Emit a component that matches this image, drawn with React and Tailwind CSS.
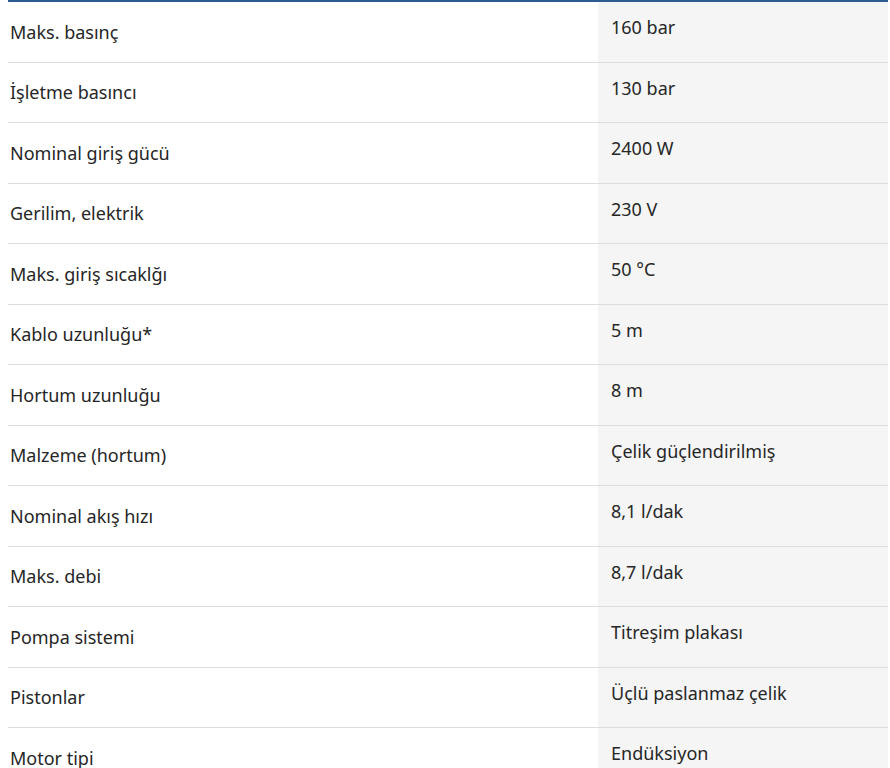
const specs = [
  ['Maks. basınç', '160 bar'],
  ['İşletme basıncı', '130 bar'],
  ['Nominal giriş gücü', '2400 W'],
  ['Gerilim, elektrik', '230 V'],
  ['Maks. giriş sıcaklğı', '50 °C'],
  ['Kablo uzunluğu*', '5 m'],
  ['Hortum uzunluğu', '8 m'],
  ['Malzeme (hortum)', 'Çelik güçlendirilmiş'],
  ['Nominal akış hızı', '8,1 l/dak'],
  ['Maks. debi', '8,7 l/dak'],
  ['Pompa sistemi', 'Titreşim plakası'],
  ['Pistonlar', 'Üçlü paslanmaz çelik'],
  ['Motor tipi', 'Endüksiyon'],
];

export default function App() {
  return (
    <div
      className="h-[768px] w-[890px] overflow-hidden bg-white pl-[8px] pr-[2px] text-[#262626]"
      style={{ fontFamily: '"Noto Sans", "Open Sans", sans-serif' }}
    >
      <div className="border-t-2 border-[#2b5b95]">
        {specs.map(([label, value]) => (
          <div
            key={label}
            className="grid h-[60.5px] grid-cols-[590px_1fr] border-b border-[#dddddd]"
          >
            <div className="flex items-center pl-[2px] text-[18px] leading-6">
              {label}
            </div>
            <div className="bg-[#f5f5f5] pl-[13px] pt-[13px] text-[18px] leading-6">
              {value}
            </div>
          </div>
        ))}
      </div>
    </div>
  );
}
